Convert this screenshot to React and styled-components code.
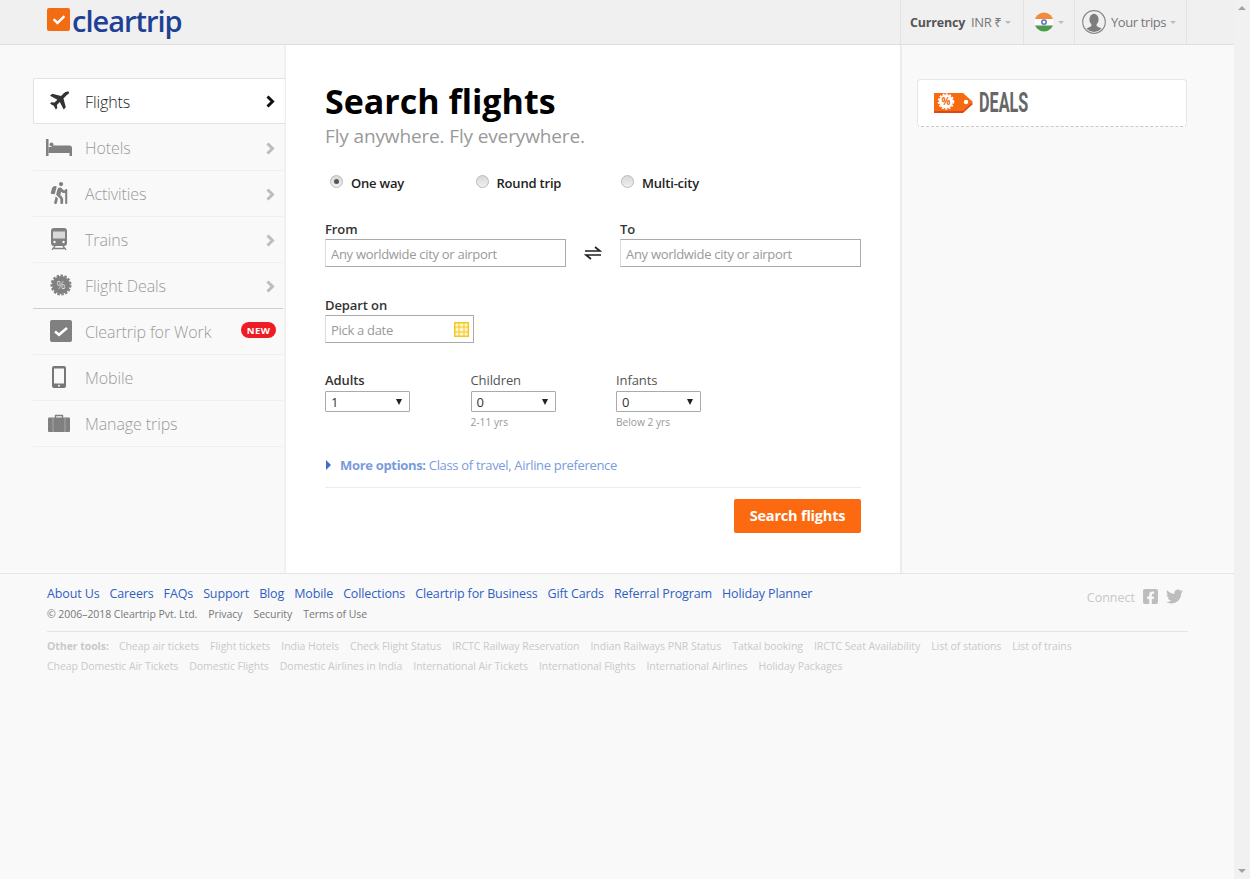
import React from 'react'
import styled, { createGlobalStyle } from 'styled-components'
import { FaHiking, FaFacebookSquare, FaTwitter, FaCheck } from 'react-icons/fa'

const Global = createGlobalStyle`
  html, body {
    margin: 0;
    padding: 0;
    background: #f9f9f9;
    font-family: "Open Sans", "Noto Sans", sans-serif;
    color: #333;
    overflow: hidden;
  }
  * { box-sizing: border-box; }
`

const Page = styled.div`
  display: flex;
  width: 1250px;
  height: 879px;
`
const Content = styled.div`
  width: 1234px;
  display: flex;
  flex-direction: column;
`
const Scrollbar = styled.div`
  width: 16px;
  background: #f1f1f1;
  display: flex;
  flex-direction: column;
  justify-content: space-between;
  align-items: center;
  padding: 6px 0;
`
const ScrollArrow = styled.span`
  width: 0;
  height: 0;
  border-left: 4px solid transparent;
  border-right: 4px solid transparent;
  ${p => p.$down ? 'border-top: 4px solid #a3a3a3;' : 'border-bottom: 4px solid #a3a3a3;'}
`

const Header = styled.header`
  height: 45px;
  flex: none;
  background: #f0f0f0;
  border-bottom: 1px solid #e0e0e0;
  display: flex;
  justify-content: space-between;
  padding: 0 47px;
`
const Logo = styled.a`
  display: flex;
  align-items: flex-start;
  padding-top: 8px;
`
const LogoBox = styled.span`
  width: 23px;
  height: 23px;
  border-radius: 2px;
  background: #f26c14;
  color: #fff;
  font-size: 12px;
  display: flex;
  align-items: center;
  justify-content: center;
`
const LogoText = styled.span`
  font-size: 29px;
  line-height: 26px;
  font-weight: 600;
  color: #1e4195;
  margin-left: 2px;
  letter-spacing: -1px;
`
const HeaderNav = styled.nav`
  display: flex;
`
const HeaderCell = styled.div`
  height: 44px;
  width: ${p => p.$w}px;
  padding-left: ${p => p.$pad || 10}px;
  border-left: 1px solid #e3e3e3;
  ${p => p.$last && 'border-right: 1px solid #e3e3e3;'}
  display: flex;
  align-items: center;
  font-size: 13px;
  letter-spacing: -0.4px;
  color: #777;
`
const CurrencyLabel = styled.strong`
  font-weight: 700;
  font-size: 12.5px;
  color: #555;
  margin-right: 6px;
  letter-spacing: -0.2px;
`
const Caret = styled.span`
  width: 0;
  height: 0;
  margin-left: 4px;
  border-left: 3.5px solid transparent;
  border-right: 3.5px solid transparent;
  border-top: 3.5px solid #bbb;
`
const TripsLabel = styled.span`
  margin-left: 5px;
`

const Body = styled.div`
  display: flex;
  height: 528px;
  flex: none;
`
const Sidebar = styled.aside`
  width: 285px;
  padding: 33px 0 0 33px;
`
const NavItem = styled.a`
  height: 46px;
  display: flex;
  align-items: center;
  padding-top: 1px;
  font-size: 16px;
  font-weight: 300;
  color: ${p => p.$active ? '#222' : '#999'};
  background: ${p => p.$active ? '#fff' : 'transparent'};
  border-bottom: 1px solid ${p => p.$strong ? '#cfcfcf' : '#efefef'};
  ${p => p.$active && `
    border: 1px solid #e2e2e2;
    border-right: none;
    border-radius: 2px 0 0 2px;
    margin-bottom: 1px;
  `}
  padding-right: ${p => p.$active ? 10 : 8}px;
  margin-right: ${p => p.$active ? 0 : 2}px;
  letter-spacing: -0.1px;
`
const NavIcon = styled.span`
  width: ${p => p.$active ? 51 : 52}px;
  flex: none;
  display: flex;
  justify-content: center;
  margin-top: -2px;
  padding-right: 1px;
  color: ${p => p.$active ? '#333' : '#808080'};
  font-size: 22px;
  svg { display: block; }
`
const NavLabel = styled.span`
  flex: 1;
`
const NavChevron = styled.svg`
  display: block;
  stroke: ${p => p.$active ? '#111' : '#bdbdbd'};
`
const NewBadge = styled.span`
  background: #ee1c25;
  color: #fff;
  font-size: 9.5px;
  font-weight: 700;
  letter-spacing: .4px;
  border-radius: 8px;
  height: 16px;
  width: 35px;
  margin: -4px -1px 0 0;
  display: flex;
  align-items: center;
  justify-content: center;
`

const Main = styled.main`
  width: 617px;
  flex: none;
  background: #fff;
  border-left: 1px solid #eee;
  border-right: 2px solid #ececec;
  padding: 33px 39px 0 39px;
  box-shadow: -1px 0 2px rgba(0,0,0,.03);
`
const Title = styled.h1`
  margin: 0;
  font-size: 34px;
  line-height: 46px;
  font-weight: 700;
  color: #000;
`
const Subtitle = styled.p`
  margin: 0;
  font-size: 19px;
  line-height: 24px;
  color: #999;
  font-weight: 400;
  letter-spacing: -0.14px;
`
const RadioRow = styled.div`
  display: flex;
  margin-top: 23px;
  padding-left: 5px;
`
const RadioOption = styled.label`
  width: 145.5px;
  display: flex;
  align-items: center;
  gap: 8px;
  font-size: 13px;
  font-weight: 600;
  color: #222;
  height: 24px;
  letter-spacing: -0.2px;
`
const Radio = styled.span`
  width: 13px;
  height: 13px;
  margin-top: -3px;
  border-radius: 50%;
  border: 1px solid #bbb;
  background: linear-gradient(#d8d8d8, #f0f0f0);
  display: flex;
  align-items: center;
  justify-content: center;
  &::after {
    content: "";
    width: 5px;
    height: 5px;
    border-radius: 50%;
    background: ${p => p.$on ? '#555' : 'transparent'};
  }
`
const RouteRow = styled.div`
  display: flex;
  margin-top: 25px;
  align-items: flex-end;
`
const Field = styled.div`
  width: ${p => p.$w}px;
  flex: none;
`
const Label = styled.label`
  display: block;
  font-size: 13px;
  line-height: 18px;
  margin-bottom: ${p => p.$gap || 1}px;
  font-weight: ${p => p.$plain ? 400 : 600};
  color: ${p => p.$plain ? '#555' : '#333'};
  letter-spacing: -0.1px;
`
const TextInput = styled.input`
  display: block;
  width: 100%;
  height: 28px;
  border: 1px solid #aaa;
  border-left-color: #ddd;
  padding: 2px 5px 0;
  font-family: inherit;
  font-size: 13px;
  letter-spacing: -0.3px;
  border-radius: 0;
  outline: none;
  &::placeholder { color: #999; opacity: 1; }
`
const SwapButton = styled.span`
  width: 54px;
  height: 28px;
  flex: none;
  display: flex;
  align-items: center;
  justify-content: center;
`
const DateField = styled.div`
  position: relative;
  width: 149px;
  margin-top: 29px;
`
const CalendarIcon = styled.svg`
  position: absolute;
  right: 5px;
  bottom: 6px;
`
const PaxRow = styled.div`
  display: flex;
  margin-top: 28px;
`
const PaxCol = styled.div`
  width: 145.5px;
`
const Select = styled.div`
  width: 85px;
  height: 21px;
  border: 1px solid #aaa;
  border-radius: 1px;
  padding: 0 5px;
  display: flex;
  align-items: center;
  justify-content: space-between;
  font-size: 13px;
  color: #333;
`
const SelectArrow = styled.span`
  width: 0;
  height: 0;
  margin-right: 2px;
  border-left: 3.5px solid transparent;
  border-right: 3.5px solid transparent;
  border-top: 6px solid #222;
`
const Hint = styled.small`
  display: block;
  margin-top: 3px;
  font-size: 10.2px;
  line-height: 14px;
  color: #999;
`
const MoreOptions = styled.div`
  display: flex;
  align-items: center;
  margin-top: 25px;
  height: 22px;
  font-size: 13px;
  color: #7a9bdc;
  padding-bottom: 11px;
  box-sizing: content-box;
  border-bottom: 1px solid #ececec;
  letter-spacing: -0.32px;
  strong { font-weight: 700; margin-right: 3px; }
`
const MoreArrow = styled.span`
  width: 0;
  height: 0;
  margin-left: 1px;
  margin-right: 9px;
  border-top: 5px solid transparent;
  border-bottom: 5px solid transparent;
  border-left: 5px solid #3f6fc4;
`
const Actions = styled.div`
  display: flex;
  justify-content: flex-end;
  margin-top: 11px;
`
const SearchButton = styled.button`
  width: 127px;
  height: 34px;
  border: none;
  border-radius: 2px;
  padding: 0 0 2px;
  background: #fb6a10;
  color: #fff;
  font-family: inherit;
  font-weight: 700;
  font-size: 14.5px;
  letter-spacing: -0.2px;
`

const Aside = styled.aside`
  flex: 1;
  padding: 34px 47px 0 15px;
`
const DealsCard = styled.div`
  height: 48px;
  background: #fff;
  border: 1px solid #e6e6e6;
  border-bottom: 1px dashed #c8c8c8;
  border-radius: 4px;
  display: flex;
  align-items: center;
  padding-left: 15px;
`
const DealsText = styled.span`
  font-family: Roboto, sans-serif;
  font-size: 27px;
  font-weight: 700;
  color: #666;
  margin-left: 5px;
  display: inline-block;
  transform: scaleX(.6);
  transform-origin: left center;
`

const Footer = styled.footer`
  flex: 1;
  border-top: 1px solid #e6e6e6;
  padding: 10px 46px 0 47px;
`
const FooterTop = styled.div`
  display: flex;
  justify-content: space-between;
  align-items: flex-start;
`
const FooterLinks = styled.div`
  display: flex;
  gap: 10px;
  font-size: 12.5px;
  line-height: 20px;
  color: #2f5fc4;
  letter-spacing: -0.13px;
`
const Legal = styled.div`
  display: flex;
  gap: 11px;
  margin-top: 1px;
  font-size: 10.5px;
  line-height: 18px;
  color: #777;
  letter-spacing: -0.05px;
`
const Connect = styled.div`
  display: flex;
  align-items: center;
  margin: 5px 5px 0 0;
  color: #c8c8c8;
  font-size: 12.5px;
  gap: 7px;
  svg { display: block; font-size: 17px; color: #bdbdbd; margin-top: -3px; }
`
const FooterRule = styled.div`
  height: 1px;
  background: #e4e4e4;
  margin: 8px 0 4px;
`
const ToolsRow = styled.div`
  display: flex;
  gap: 11px;
  font-size: 10.5px;
  line-height: 20px;
  color: #c9c9c9;
  letter-spacing: -0.05px;
  strong { font-weight: 700; margin-right: -1px; }
`

const PlaneIcon = () => (
  <svg width="21" height="20" viewBox="0 0 20 19">
    <path fill="currentColor" d="M19 1c-1-1-3.500-.3-5.200 1.400L11.500 4.700 3 2.500 1 4.500 8 8.200 5.200 11 2.300 10.600 1 12l3.500 2 2 3.500 1.400-1.300-.4-2.900 2.800-2.800L14 17.500l2-2-2.200-8.500 2.300-2.300C17.800 3 20 2 19 1z" />
  </svg>
)
const BedIcon = () => (
  <svg width="26" height="18" viewBox="0 0 26 18">
    <g fill="currentColor">
      <rect y="1" width="2.500" height="17" />
      <circle cx="5.500" cy="6.500" r="2" />
      <path d="M2.500 9H6V7.500h17.500Q26 7.500 26 10v8h-2.500v-3h-21z" />
    </g>
  </svg>
)
const TrainIcon = () => (
  <svg width="16" height="22" viewBox="0 0 16 22">
    <path fill="#808080" d="M3 0h10a3 3 0 0 1 3 3v12a3 3 0 0 1-3 3H3a3 3 0 0 1-3-3V3a3 3 0 0 1 3-3z" />
    <rect x="2" y="3.500" width="12" height="7" fill="#d9d9d9" />
    <circle cx="3.500" cy="14" r="1.200" fill="#f9f9f9" />
    <circle cx="12.500" cy="14" r="1.200" fill="#f9f9f9" />
    <path d="M4 18l-3 4M12 18l3 4M3 20.500h10" fill="none" stroke="#808080" strokeWidth="1.300" />
  </svg>
)
const SuitcaseIcon = () => (
  <svg width="22" height="18" viewBox="0 0 22 18">
    <path d="M7.500 4V1.500h7V4" fill="none" stroke="#808080" strokeWidth="1.400" />
    <rect y="3.500" width="22" height="14.500" rx="1" fill="#808080" />
    <path d="M5 3.500V18M17 3.500V18" stroke="#a8a8a8" strokeWidth="1" />
  </svg>
)
const DealBadgeIcon = () => (
  <svg width="22" height="22" viewBox="0 0 22 22" style={{ marginLeft: 4 }}>
    <circle cx="11" cy="11" r="9" fill="#808080" />
    <circle cx="11" cy="11" r="9.500" fill="none" stroke="#808080" strokeWidth="2" strokeDasharray="2.500 1.500" />
    <text x="11" y="15" fontSize="11" textAnchor="middle" fill="#fff" fontFamily="Open Sans">%</text>
  </svg>
)
const WorkIcon = () => (
  <svg width="22" height="22" viewBox="0 0 22 22" style={{ marginLeft: 4 }}>
    <rect width="22" height="22" rx="2" fill="#808080" />
    <path d="M5 11.500l4 3.200 8-6.700" fill="none" stroke="#fff" strokeWidth="2.600" />
  </svg>
)
const MobileIcon = () => (
  <svg width="14" height="22" viewBox="0 0 14 22">
    <rect width="14" height="22" rx="2" fill="#777" />
    <rect x="2" y="2.500" width="10" height="15" fill="#f9f9f9" />
    <circle cx="7" cy="19.700" r="1" fill="#f9f9f9" />
  </svg>
)
const SwapIcon = () => (
  <svg width="18" height="14" viewBox="0 0 18 14">
    <path d="M1 5h15L11 1M17 9H2l5 4" fill="none" stroke="#222" strokeWidth="1.700" />
  </svg>
)
const CalIcon = () => (
  <CalendarIcon width="15" height="15" viewBox="0 0 15 15">
    <rect x=".75" y=".75" width="13.500" height="13.500" fill="#fff6cf" stroke="#f6c81e" strokeWidth="1.500" />
    <path d="M5 1v13M10 1v13M1 5h13M1 10h13" stroke="#f6c81e" strokeWidth="1" />
  </CalendarIcon>
)
const FlagIcon = () => (
  <svg width="20" height="20" viewBox="0 0 20 20">
    <clipPath id="flagClip"><circle cx="10" cy="10" r="9.500" /></clipPath>
    <g clipPath="url(#flagClip)">
      <rect width="20" height="7" fill="#f58a3c" />
      <rect y="7" width="20" height="6.500" fill="#fbfbfb" />
      <rect y="13.500" width="20" height="6.500" fill="#4f9a4a" />
    </g>
    <circle cx="10" cy="10" r="2.200" fill="none" stroke="#4a63b0" strokeWidth="1.300" />
  </svg>
)
const AvatarIcon = () => (
  <svg width="24" height="24" viewBox="0 0 24 24">
    <circle cx="12" cy="12" r="11.300" fill="#f0f0f0" stroke="#8a8a8a" strokeWidth="1.200" />
    <clipPath id="avatarClip"><circle cx="12" cy="12" r="10" /></clipPath>
    <g clipPath="url(#avatarClip)" fill="#7d7d7d">
      <ellipse cx="12" cy="9.500" rx="4.600" ry="5.800" />
      <path d="M9.500 14h5l.3 2.200 4.700 2.200 1 5.600H3.500l1-5.600 4.700-2.200z" />
    </g>
  </svg>
)
const TagIcon = () => (
  <svg width="41" height="22" viewBox="0 0 41 22">
    <path d="M1 2h29l10 9-10 9H1z" fill="#d8481a" transform="translate(0 1)" />
    <path d="M1 1h29l10 9-10 9H1z" fill="#f76a10" />
    <circle cx="33" cy="10" r="2.200" fill="#fff" />
    <circle cx="13" cy="9.500" r="7" fill="#fff" />
    <circle cx="13" cy="9.500" r="7.500" fill="none" stroke="#fff" strokeWidth="1.500" strokeDasharray="2 1.500" />
    <text x="13" y="13" fontSize="10" fontWeight="700" textAnchor="middle" fill="#f76a10" fontFamily="Open Sans">%</text>
  </svg>
)
const Chevron = ({ active }) => (
  <NavChevron $active={active} width="9" height="13" viewBox="0 0 9 13" fill="none" strokeWidth="3">
    <path d="M1.500 1.500l5 5-5 5" />
  </NavChevron>
)

const navItems = [
  { label: 'Flights', icon: <PlaneIcon />, chevron: true, active: true },
  { label: 'Hotels', icon: <BedIcon />, chevron: true },
  { label: 'Activities', icon: <FaHiking />, chevron: true },
  { label: 'Trains', icon: <TrainIcon />, chevron: true },
  { label: 'Flight Deals', icon: <DealBadgeIcon />, chevron: true, strong: true },
  { label: 'Cleartrip for Work', icon: <WorkIcon />, badge: true },
  { label: 'Mobile', icon: <MobileIcon /> },
  { label: 'Manage trips', icon: <SuitcaseIcon /> },
]

const footerLinks = ['About Us', 'Careers', 'FAQs', 'Support', 'Blog', 'Mobile', 'Collections', 'Cleartrip for Business', 'Gift Cards', 'Referral Program', 'Holiday Planner']
const legalLinks = ['© 2006–2018 Cleartrip Pvt. Ltd.', 'Privacy', 'Security', 'Terms of Use']
const toolsOne = ['Cheap air tickets', 'Flight tickets', 'India Hotels', 'Check Flight Status', 'IRCTC Railway Reservation', 'Indian Railways PNR Status', 'Tatkal booking', 'IRCTC Seat Availability', 'List of stations', 'List of trains']
const toolsTwo = ['Cheap Domestic Air Tickets', 'Domestic Flights', 'Domestic Airlines in India', 'International Air Tickets', 'International Flights', 'International Airlines', 'Holiday Packages']
const pax = [
  { label: 'Adults', value: '1', bold: true },
  { label: 'Children', value: '0', hint: '2-11 yrs' },
  { label: 'Infants', value: '0', hint: 'Below 2 yrs' },
]

export default () => {
  return (
    <Page>
      <Global />
      <Content>
        <Header>
          <Logo>
            <LogoBox><FaCheck /></LogoBox>
            <LogoText>cleartrip</LogoText>
          </Logo>
          <HeaderNav>
            <HeaderCell $w={123} $pad={9}>
              <CurrencyLabel>Currency</CurrencyLabel>INR ₹<Caret />
            </HeaderCell>
            <HeaderCell $w={51}>
              <FlagIcon /><Caret />
            </HeaderCell>
            <HeaderCell $w={113} $pad={7} $last>
              <AvatarIcon /><TripsLabel>Your trips</TripsLabel><Caret />
            </HeaderCell>
          </HeaderNav>
        </Header>
        <Body>
          <Sidebar>
            {navItems.map(item => (
              <NavItem key={item.label} $active={item.active} $strong={item.strong}>
                <NavIcon $active={item.active}>{item.icon}</NavIcon>
                <NavLabel>{item.label}</NavLabel>
                {item.chevron && <Chevron active={item.active} />}
                {item.badge && <NewBadge>NEW</NewBadge>}
              </NavItem>
            ))}
          </Sidebar>
          <Main>
            <Title>Search flights</Title>
            <Subtitle>Fly anywhere. Fly everywhere.</Subtitle>
            <RadioRow>
              <RadioOption><Radio $on />One way</RadioOption>
              <RadioOption><Radio />Round trip</RadioOption>
              <RadioOption><Radio />Multi-city</RadioOption>
            </RadioRow>
            <RouteRow>
              <Field $w={241}>
                <Label>From</Label>
                <TextInput placeholder="Any worldwide city or airport" />
              </Field>
              <SwapButton><SwapIcon /></SwapButton>
              <Field $w={241}>
                <Label>To</Label>
                <TextInput placeholder="Any worldwide city or airport" />
              </Field>
            </RouteRow>
            <DateField>
              <Label>Depart on</Label>
              <TextInput placeholder="Pick a date" />
              <CalIcon />
            </DateField>
            <PaxRow>
              {pax.map(p => (
                <PaxCol key={p.label}>
                  <Label $plain={!p.bold} $gap={2}>{p.label}</Label>
                  <Select>{p.value}<SelectArrow /></Select>
                  {p.hint && <Hint>{p.hint}</Hint>}
                </PaxCol>
              ))}
            </PaxRow>
            <MoreOptions>
              <MoreArrow />
              <strong>More options:</strong> Class of travel, Airline preference
            </MoreOptions>
            <Actions>
              <SearchButton>Search flights</SearchButton>
            </Actions>
          </Main>
          <Aside>
            <DealsCard>
              <TagIcon />
              <DealsText>DEALS</DealsText>
            </DealsCard>
          </Aside>
        </Body>
        <Footer>
          <FooterTop>
            <div>
              <FooterLinks>
                {footerLinks.map(l => <a key={l}>{l}</a>)}
              </FooterLinks>
              <Legal>
                {legalLinks.map(l => <a key={l}>{l}</a>)}
              </Legal>
            </div>
            <Connect>Connect <FaFacebookSquare /><FaTwitter /></Connect>
          </FooterTop>
          <FooterRule />
          <ToolsRow>
            <strong>Other tools:</strong>
            {toolsOne.map(l => <a key={l}>{l}</a>)}
          </ToolsRow>
          <ToolsRow>
            {toolsTwo.map(l => <a key={l}>{l}</a>)}
          </ToolsRow>
        </Footer>
      </Content>
      <Scrollbar>
        <ScrollArrow />
        <ScrollArrow $down />
      </Scrollbar>
    </Page>
  )
}
